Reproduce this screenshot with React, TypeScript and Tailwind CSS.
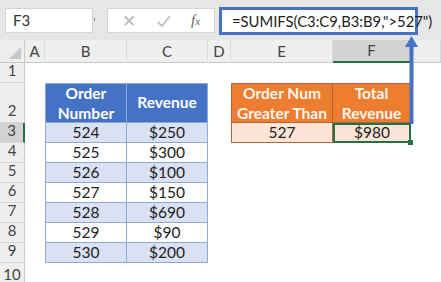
import React from "react";

const blueRows = [
  ["524", "$250"],
  ["525", "$300"],
  ["526", "$100"],
  ["527", "$150"],
  ["528", "$690"],
  ["529", "$90"],
  ["530", "$200"],
];

const cols = ["A", "B", "C", "D", "E", "F", ""];

const RowHead: React.FC<{ n: string; active?: boolean }> = ({ n, active }) => (
  <div
    className={`flex items-end justify-center pb-[1px] text-[15px] text-[#444] border-b border-[#d6d6d6] ${
      active ? "bg-[#d2d2d2] border-r-2 border-r-[#217346]" : "bg-[#efefef] border-r border-r-[#c8c8c8]"
    }`}
  >
    {n}
  </div>
);

const App: React.FC = () => {
  return (
    <div className="relative w-[441px] h-[282px] overflow-hidden bg-white font-['Lato',sans-serif] text-[#222]">
      {/* formula bar */}
      <div className="flex h-[40px] items-start bg-[#e6e6e6] pt-[8px]">
        <div className="ml-[5px] flex h-[25px] w-[88px] items-center border border-[#d6d6d6] bg-white pl-[7px] text-[15px] text-[#333]">
          F3
        </div>
        <div className="mt-[10px] ml-[1px] h-[3px] w-[1px] bg-[#888]" />
        <div className="ml-[12px] flex h-[25px] w-[108px] items-center border border-[#d6d6d6] bg-white text-[#bbb]">
          <span className="ml-[14px] text-[17px] leading-none">✕</span>
          <svg className="ml-[20px]" width="16" height="14" viewBox="0 0 16 14">
            <path d="M2 8 L6 12 L14 2" fill="none" stroke="#c4c4c4" strokeWidth="2" />
          </svg>
          <span className="ml-[19px] font-['Liberation_Serif',serif] text-[15px] italic text-[#666]">
            f<span className="text-[11px]">x</span>
          </span>
        </div>
        <div className="ml-[4px] -mt-[1px] flex h-[28px] w-[199px] items-center border-[3px] border-[#4472c4] bg-white pl-[10px] text-[14.8px] text-[#222]">
          =SUMIFS(C3:C9,B3:B9,"&gt;527")
        </div>
      </div>

      {/* sheet */}
      <div className="grid grid-cols-[25px_20px_82px_81px_23px_102px_78px_1fr] grid-rows-[23px_20px_40px_repeat(7,20px)_1fr] h-[242px]">
        {/* column headers */}
        <div className="relative border-r border-b border-[#c8c8c8] bg-[#efefef]">
          <svg className="absolute right-[3px] bottom-[3px]" width="12" height="12" viewBox="0 0 12 12">
            <path d="M12 0 L12 12 L0 12 Z" fill="#c6c6c6" />
          </svg>
        </div>
        {cols.map((c) => (
          <div
            key={c || "rest"}
            className={`flex items-center justify-center text-[15px] text-[#444] ${
              c === "F"
                ? "bg-[#d2d2d2] border-b-2 border-b-[#217346] border-r border-r-[#c8c8c8]"
                : "bg-[#efefef] border-b border-b-[#c8c8c8] border-r border-r-[#dadada]"
            }`}
          >
            {c}
          </div>
        ))}

        {/* row 1 */}
        <RowHead n="1" />
        <div className="col-span-7" />

        {/* row 2 */}
        <RowHead n="2" />
        <div />
        <div className="flex items-center justify-center border border-[#8ea9db] bg-[#4472c4] text-center text-[15.5px] font-bold leading-[20px] text-white">
          Order
          <br />
          Number
        </div>
        <div className="flex items-center justify-center border-y border-r border-[#8ea9db] bg-[#4472c4] text-[15.5px] font-bold text-white">
          Revenue
        </div>
        <div />
        <div className="flex items-center justify-center border border-[#b4643a] bg-[#ed7d31] text-center text-[15.5px] font-bold leading-[20px] text-[#fff6ee]">
          Order Num
          <br />
          Greater Than
        </div>
        <div className="flex items-center justify-center border-y border-r border-[#b4643a] bg-[#ed7d31] text-center text-[15.5px] font-bold leading-[20px] text-[#fff6ee]">
          Total
          <br />
          Revenue
        </div>
        <div />

        {blueRows.map((r, i) => {
          const fill = i % 2 === 0 ? "bg-[#d9e1f2]" : "bg-white";
          return (
            <React.Fragment key={r[0]}>
              <RowHead n={String(i + 3)} active={i === 0} />
              <div />
              <div className={`flex items-center justify-center border-x border-b border-[#8ea9db] ${fill} text-[15.5px]`}>
                {r[0]}
              </div>
              <div className={`flex items-center justify-center border-r border-b border-[#8ea9db] ${fill} text-[15.5px]`}>
                {r[1]}
              </div>
              <div />
              {i === 0 ? (
                <>
                  <div className="flex items-center justify-center border-x border-b border-[#b4643a] bg-[#fce4d6] text-[15.5px]">
                    527
                  </div>
                  <div className="relative flex items-center justify-center border-2 border-[#217346] bg-[#fce4d6] text-[15.5px]">
                    $980
                    <div className="absolute -right-[4px] -bottom-[4px] h-[5px] w-[5px] bg-[#217346]" />
                  </div>
                </>
              ) : (
                <>
                  <div />
                  <div />
                </>
              )}
              <div />
            </React.Fragment>
          );
        })}

        {/* row 10 */}
        <RowHead n="10" />
        <div className="col-span-7" />
      </div>

      {/* arrow from result to formula */}
      <svg className="absolute left-[403px] top-[36px]" width="18" height="90" viewBox="0 0 18 90">
        <rect x="6.5" y="10" width="4" height="78" fill="#4472c4" />
        <path d="M8.5 0 L15 11 L2 11 Z" fill="#4472c4" />
      </svg>
    </div>
  );
};

export default App;
